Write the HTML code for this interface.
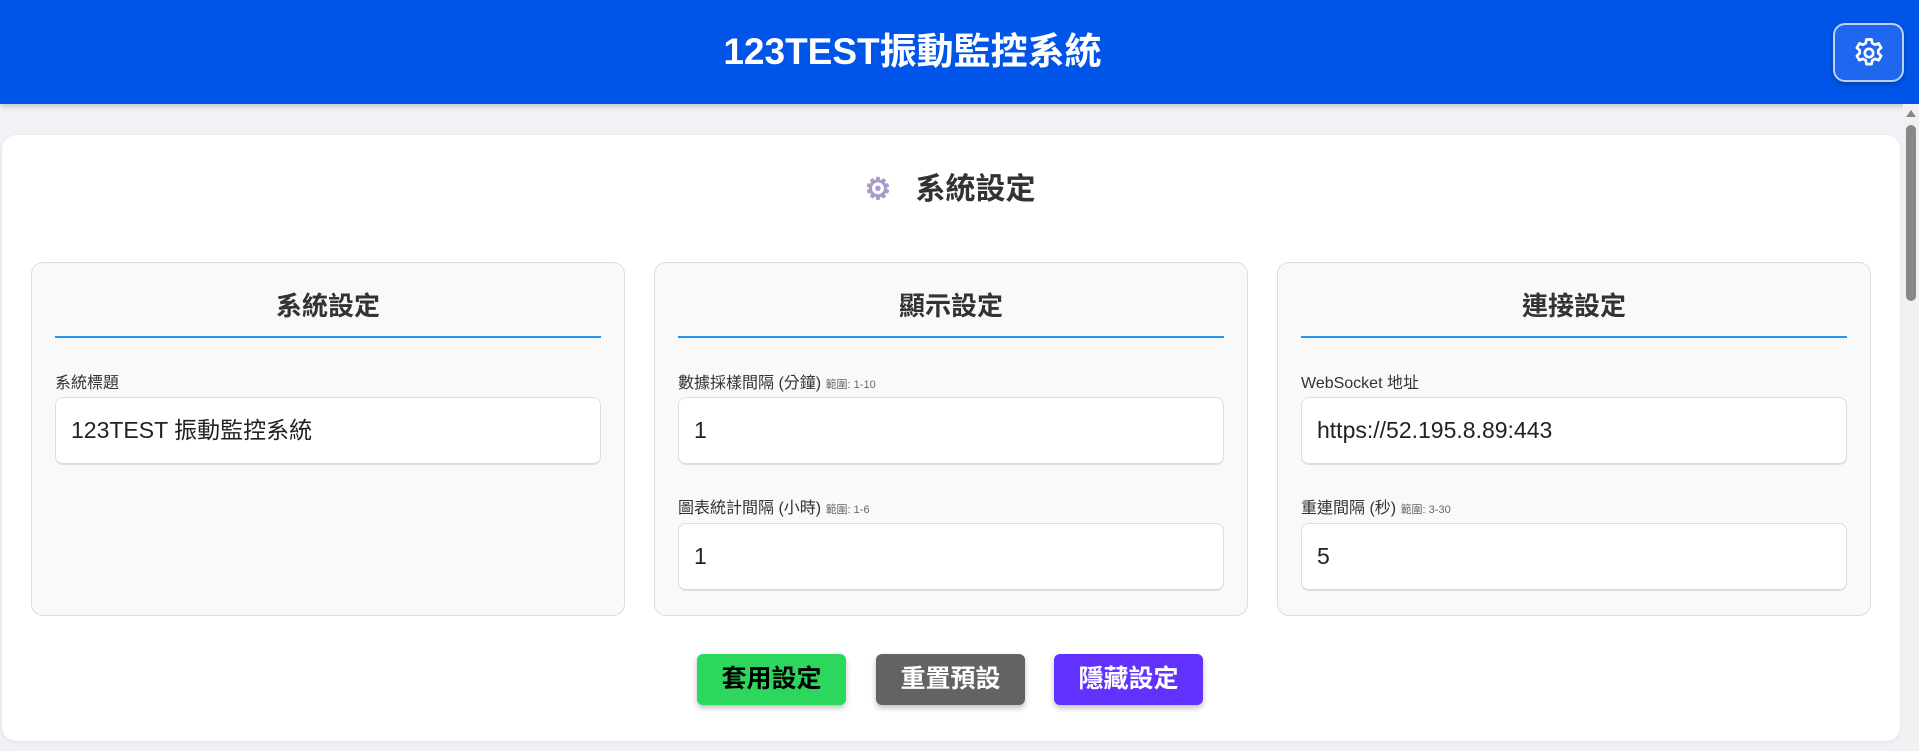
<!DOCTYPE html>
<html><head><meta charset="utf-8"><style>
*{box-sizing:border-box;margin:0;padding:0}
body{width:1919px;height:751px;overflow:hidden;background:#f0f2f5;font-family:"Liberation Sans","Noto Sans CJK TC",sans-serif;position:relative}
.hdr{position:absolute;left:0;top:0;width:1919px;height:104px;background:#0055e8;box-shadow:0 2px 6px rgba(0,0,0,.2)}
.hdr h1{position:absolute;left:0;width:1825px;top:30px;text-align:center;color:#fff;font-size:37px;font-weight:bold;line-height:44px}
.sbtn{position:absolute;left:1833px;top:23px;width:71px;height:59px;border:2px solid rgba(255,255,255,.7);border-radius:12px;background:#1f67ee;box-shadow:0 2px 6px rgba(0,0,0,.25);display:flex;align-items:center;justify-content:center}
.panel{position:absolute;left:2px;top:135px;width:1898px;height:606px;background:#fff;border-radius:14px;box-shadow:0 1px 4px rgba(0,0,0,.08)}
.sb{position:absolute;left:1903px;top:104px;width:16px;height:647px;background:#f1f1f1}
.thumb{position:absolute;left:1906px;top:125px;width:10px;height:176px;background:#888;border-radius:5px}
.arr{position:absolute;left:1906px;top:110px;width:0;height:0;border-left:5px solid transparent;border-right:5px solid transparent;border-bottom:7px solid #888}
.ttl{position:absolute;top:170px;left:0;width:1900px;text-align:center;font-size:30px;font-weight:bold;color:#333;line-height:40px}
.card{position:absolute;top:262px;width:594px;height:354px;background:#f9f9f9;border:1px solid #ddd;border-radius:12px}
.card h2{position:absolute;top:26px;left:0;width:100%;text-align:center;font-size:26px;font-weight:bold;color:#333;line-height:34px}
.line{position:absolute;left:23px;right:23px;top:73px;height:1.5px;background:#2196f3}
.lbl{position:absolute;left:23px;font-size:16px;color:#333;line-height:18px}
.lbl small{font-size:11px;color:#666}
.inp{position:absolute;left:23px;right:23px;height:68px;background:#fff;border:1px solid #ddd;border-bottom:2px solid #ddd;border-radius:8px;font-size:23px;color:#222;padding-left:15px;line-height:64px}
.btn{position:absolute;top:654px;width:149px;height:51px;border-radius:6px;font-size:25px;font-weight:bold;text-align:center;line-height:51px;box-shadow:0 3px 6px rgba(0,0,0,.25)}
</style></head><body>
<div class="hdr"><h1>123TEST振動監控系統</h1>
<div class="sbtn"><svg width="36" height="36" viewBox="0 0 24 24" fill="none" stroke="#fff" stroke-width="1.8" stroke-linejoin="round"><path d="M10.3 3h3.4l.5 2.5 1.8 1 2.4-.9 1.7 2.9-1.9 1.7v2l1.9 1.7-1.7 2.9-2.4-.9-1.8 1-.5 2.5h-3.4l-.5-2.5-1.8-1-2.4.9-1.7-2.9 1.9-1.7v-2L3.9 8.5l1.7-2.9 2.4.9 1.8-1z"/><circle cx="12" cy="12" r="2.8"/></svg></div></div>
<div class="sb"></div><div class="arr"></div><div class="thumb"></div>
<div class="panel"></div>
<div class="ttl"><span style="color:#a99cc9;font-size:30px;margin-right:24px">⚙</span>系統設定</div>
<div class="card" style="left:31px"><h2>系統設定</h2><div class="line"></div>
<div class="lbl" style="top:112px">系統標題</div><div class="inp" style="top:134px">123TEST 振動監控系統</div></div>
<div class="card" style="left:654px"><h2>顯示設定</h2><div class="line"></div>
<div class="lbl" style="top:112px">數據採樣間隔 (分鐘) <small>範圍: 1-10</small></div><div class="inp" style="top:134px">1</div>
<div class="lbl" style="top:237px">圖表統計間隔 (小時) <small>範圍: 1-6</small></div><div class="inp" style="top:260px">1</div></div>
<div class="card" style="left:1277px"><h2>連接設定</h2><div class="line"></div>
<div class="lbl" style="top:112px">WebSocket 地址</div><div class="inp" style="top:134px">https://52.195.8.89:443</div>
<div class="lbl" style="top:237px">重連間隔 (秒) <small>範圍: 3-30</small></div><div class="inp" style="top:260px">5</div></div>
<div class="btn" style="left:697px;background:#2dd65c;color:#000">套用設定</div>
<div class="btn" style="left:876px;background:#636366;color:#fff">重置預設</div>
<div class="btn" style="left:1054px;background:#6231fd;color:#fff">隱藏設定</div>
</body></html>
